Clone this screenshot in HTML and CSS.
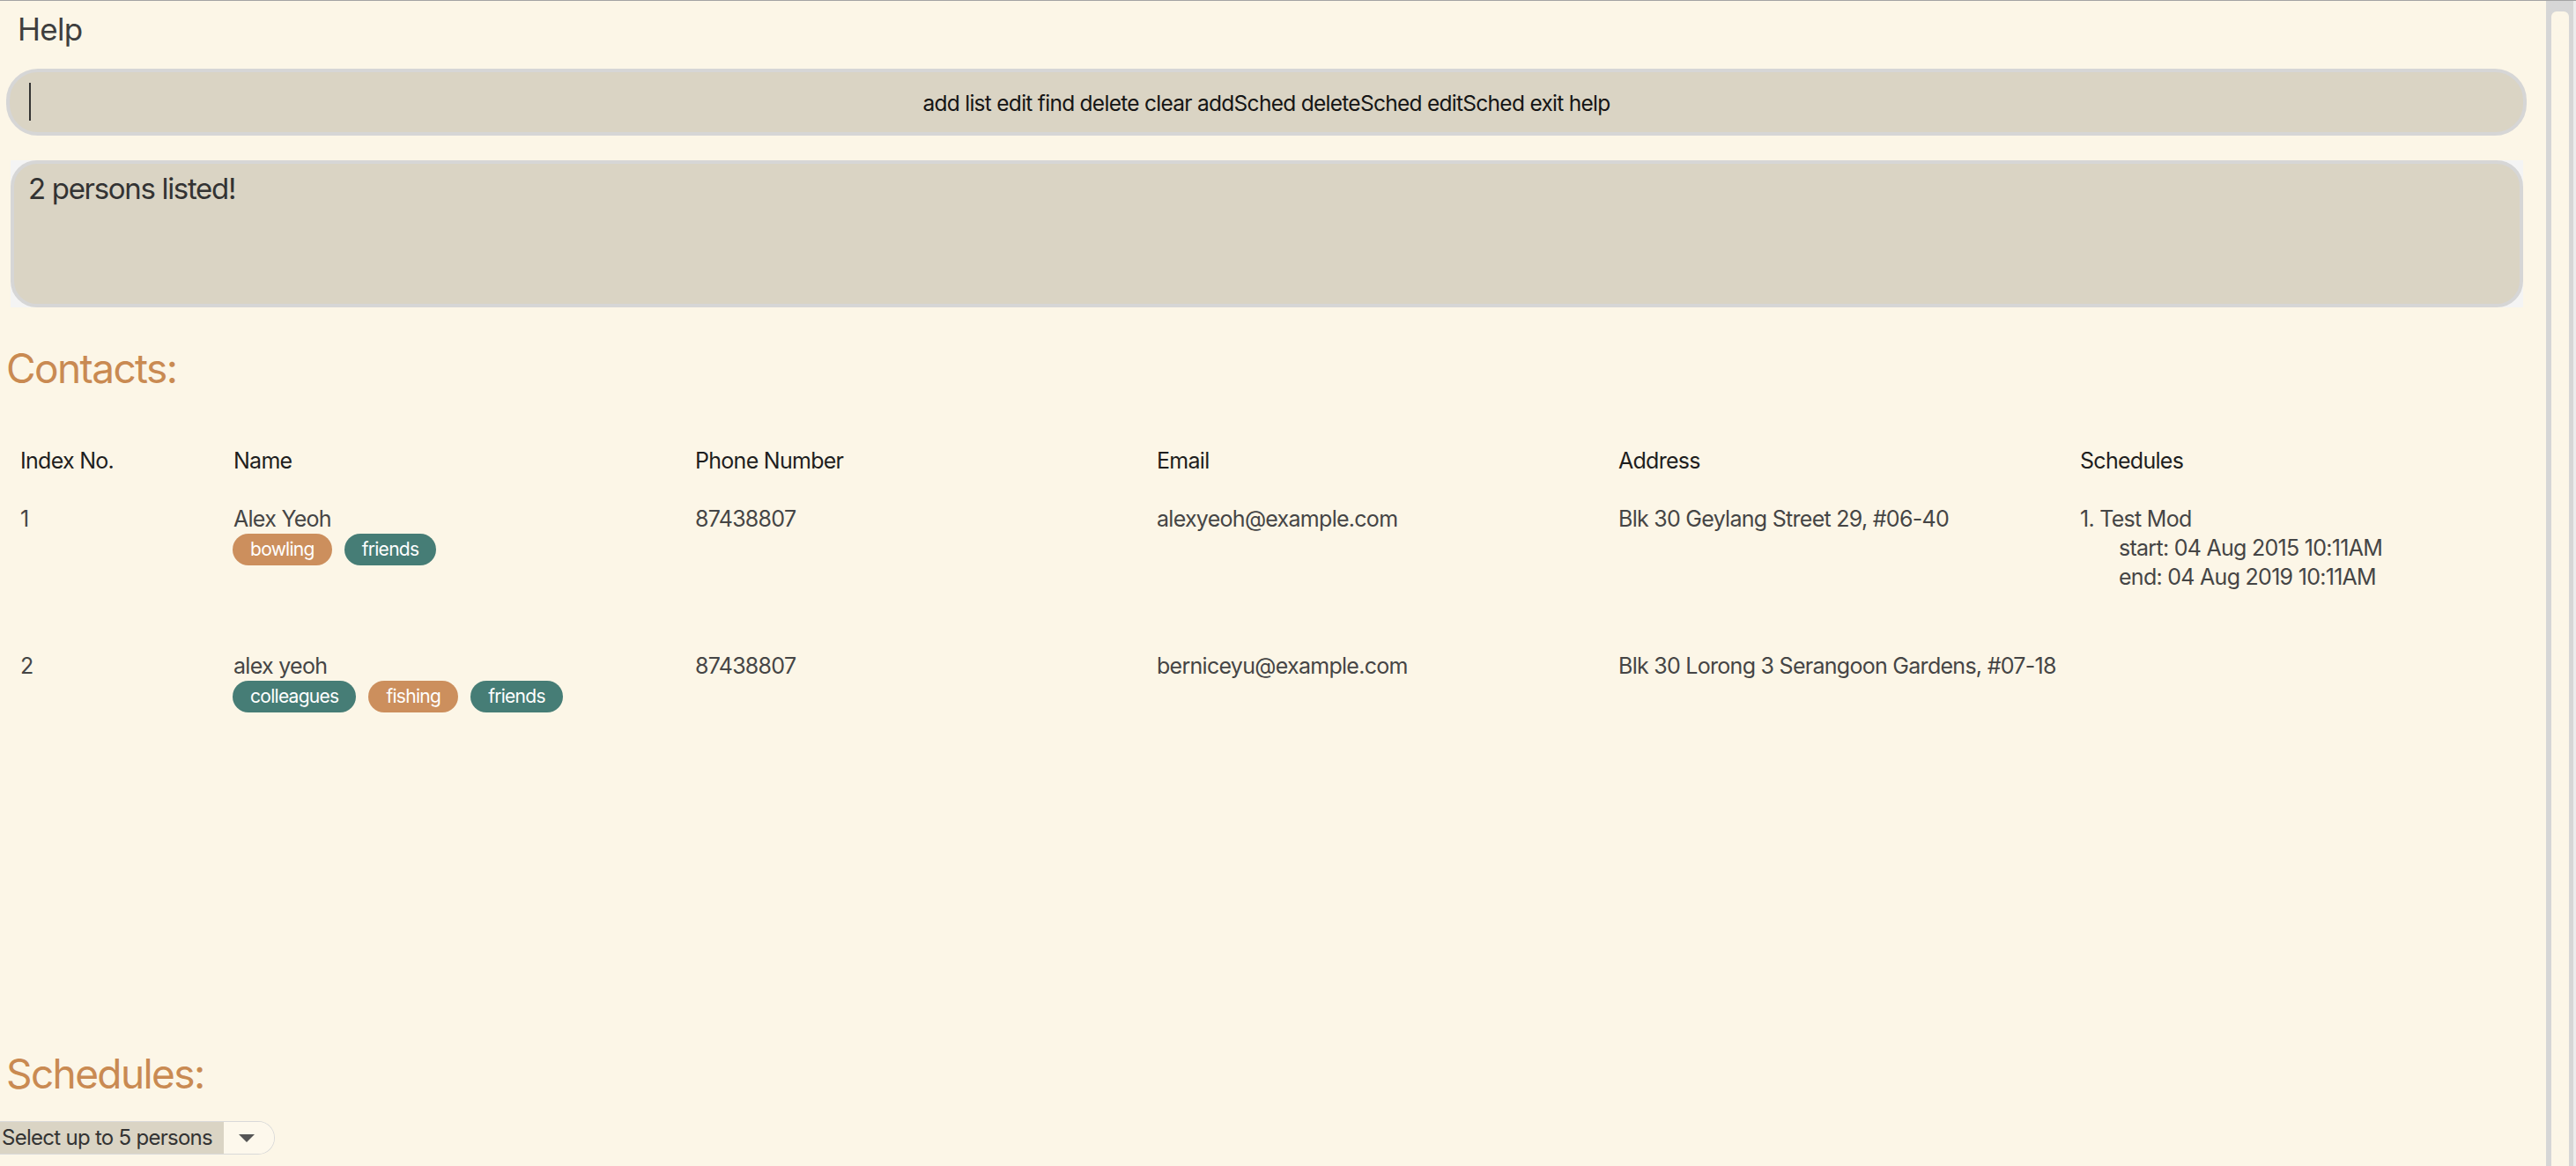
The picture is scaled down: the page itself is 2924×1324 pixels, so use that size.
FILE: index.html
```html
<!DOCTYPE html>
<html lang="en">
<head>
<meta charset="utf-8">
<title>Address Book</title>
<link rel="stylesheet" href="styles.css">
</head>
<body>
<div class="app">
  <main class="main">
    <div class="menubar"><span class="menu-item">Help</span></div>

    <div class="command">
      <span class="caret"></span>
      <span class="command-text">add list edit find delete clear addSched deleteSched editSched exit help</span>
    </div>

    <div class="result-wrap">
      <div class="result">2 persons listed!</div>
    </div>

    <h2 class="section-title contacts-title">Contacts:</h2>

    <div class="contacts">
      <div class="grid head">
        <div>Index No.</div>
        <div>Name</div>
        <div>Phone Number</div>
        <div>Email</div>
        <div>Address</div>
        <div>Schedules</div>
      </div>
      <div class="grid row">
        <div>1</div>
        <div>
          <div>Alex Yeoh</div>
          <div class="tags"><span class="tag orange">bowling</span><span class="tag teal">friends</span></div>
        </div>
        <div>87438807</div>
        <div>alexyeoh@example.com</div>
        <div>Blk 30 Geylang Street 29, #06-40</div>
        <div>
          <div>1. Test Mod</div>
          <div class="indent">start: 04 Aug 2015 10:11AM</div>
          <div class="indent">end: 04 Aug 2019 10:11AM</div>
        </div>
      </div>
      <div class="grid row">
        <div>2</div>
        <div>
          <div>alex yeoh</div>
          <div class="tags"><span class="tag teal">colleagues</span><span class="tag orange">fishing</span><span class="tag teal">friends</span></div>
        </div>
        <div>87438807</div>
        <div>berniceyu@example.com</div>
        <div>Blk 30 Lorong 3 Serangoon Gardens, #07-18</div>
        <div></div>
      </div>
    </div>

    <h2 class="section-title">Schedules:</h2>

    <div class="select">
      <span class="select-label">Select up to 5 persons</span>
      <span class="select-arrow"><svg width="18" height="9" viewBox="0 0 18 9"><path d="M0 0 H18 L9 9 Z" fill="#555"/></svg></span>
    </div>
  </main>

  <div class="scrollbar"><div class="thumb"></div></div>
</div>
</body>
</html>
```

FILE: styles.css
```css
* { box-sizing: border-box; }

html, body {
  margin: 0;
  padding: 0;
  height: 100%;
}

body {
  background: #fcf6e7;
  font-family: Inter, "Noto Sans", sans-serif;
  letter-spacing: -0.045em;
  color: #444;
  overflow: hidden;
  border-top: 1px solid #a4a4a4;
}

.app {
  display: flex;
  height: 100%;
}

.main {
  flex: 1;
  min-width: 0;
}

.menubar {
  height: 77px;
  padding: 15px 0 0 20px;
}

.menu-item {
  font-size: 35px;
  line-height: 35px;
  color: #3e3e3e;
  display: inline-block;
}

.command {
  position: relative;
  height: 76px;
  margin: 0 22px 0 7px;
  background: #dad4c4;
  border: 4px solid #d6d6d6;
  border-radius: 36px;
  display: flex;
  align-items: center;
  justify-content: center;
}

.caret {
  position: absolute;
  left: 22px;
  top: 12px;
  width: 2px;
  height: 43px;
  background: #333;
}

.command-text {
  font-size: 24.5px;
  color: #151515;
  padding-top: 1px;
}

.result-wrap {
  margin: 28px 26px 0 12px;
  height: 167px;
  background: #f4f4f4;
}

.result {
  height: 100%;
  background: #dad4c4;
  border: 4px solid #d6d6d6;
  border-radius: 30px;
  padding: 8px 16px;
  font-size: 33px;
  line-height: 40px;
  letter-spacing: -0.04em;
  color: #333;
}

.section-title {
  margin: 0 0 0 7px;
  font-size: 46px;
  line-height: 56px;
  font-weight: 400;
  color: #c98a52;
  letter-spacing: -0.035em;
}

.contacts-title {
  margin-top: 41px;
}

.contacts {
  margin: 60px 0 0 23px;
  height: 685px;
  font-size: 25px;
  line-height: 34px;
}

.grid {
  display: grid;
  grid-template-columns: 242px 524px 524px 524px 524px 1fr;
}

.head {
  color: #1e1e1e;
  margin-bottom: 32px;
}

.row {
  min-height: 167px;
  color: #454545;
}

.tags {
  display: flex;
  gap: 14px;
  margin-left: -1px;
}

.tag {
  height: 36px;
  line-height: 36px;
  padding: 0 20px;
  border-radius: 18px;
  font-size: 21px;
  color: #fff;
}

.orange { background: #cc8f5d; }
.teal { background: #467d76; }

.indent {
  padding-left: 44px;
  line-height: 33px;
}

.select {
  margin-top: 26px;
  width: 312px;
  height: 38px;
  display: flex;
  border: 1px solid #d9d9d9;
  border-left: none;
  border-radius: 0 19px 19px 0;
  overflow: hidden;
}

.select-label {
  width: 254px;
  background: #dad4c4;
  font-size: 24px;
  line-height: 36px;
  color: #333;
  padding-left: 2px;
}

.select-arrow {
  flex: 1;
  background: #fdf8ec;
  display: flex;
  align-items: center;
  justify-content: center;
  padding-right: 6px;
}

.scrollbar {
  width: 34px;
  background: #d6d6d6;
  border-right: 3px solid #ececec;
  padding: 12px 5px 0 6px;
}

.thumb {
  height: 100%;
  background: #fcf6e7;
  border-radius: 6px 6px 0 0;
}
```
